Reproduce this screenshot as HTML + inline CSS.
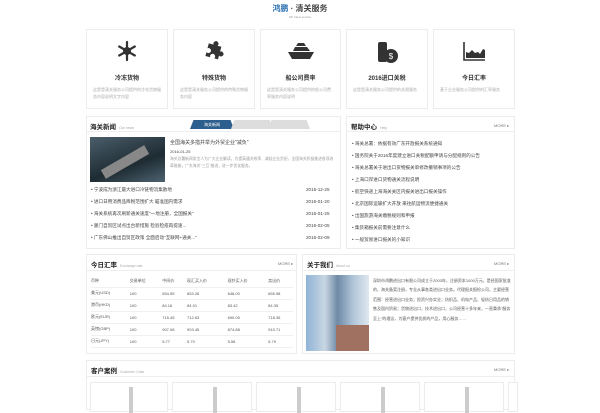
<!DOCTYPE html>
<html><head><meta charset="utf-8"><style>
*{margin:0;padding:0;box-sizing:border-box}
body{width:600px;height:400px;overflow:hidden;background:#fff;font-family:"Liberation Sans","Noto Sans CJK SC",sans-serif;color:#333;position:relative}
.a{position:absolute}
.box{position:absolute;border:1px solid #ececec;background:#fff}
.t{font-size:5px;white-space:nowrap}
.g{color:#999}
.card .i{position:absolute;left:0;right:0;top:10px;text-align:center}
.card .n{position:absolute;left:0;right:0;top:43px;text-align:center;font-size:6px;font-weight:bold;color:#333}
.card .d{position:absolute;left:6px;right:6px;top:56px;font-size:4px;line-height:7px;color:#aaa}
.hd{font-size:6.5px;font-weight:bold;color:#222}
.hd span{font-weight:normal;font-size:3.5px;color:#aaa;margin-left:3px}
.more{font-size:4px;color:#777}
.li{position:absolute;font-size:4.6px;color:#444;white-space:nowrap}
.hr{position:absolute;height:1px;background:#eee}
table{border-collapse:collapse;font-size:4px;color:#555}
td{height:12px;border-bottom:1px solid #f0f0f0;white-space:nowrap}
</style></head><body>
<div class="a" style="left:0;right:0;top:3px;text-align:center;font-size:8px;font-weight:bold;color:#444"><span style="color:#2a6fb0">鸿鹏</span> · 清关服务</div>
<div class="a t g" style="left:0;right:0;top:15px;text-align:center;font-size:3px">HP Clear service</div>

<div class="box card" style="left:86px;top:29px;width:82px;height:80px"><div class="i"><svg width="22" height="22" viewBox="0 0 22 22"><g stroke="#333" stroke-width="2.2" stroke-linecap="round"><line x1="11" y1="2" x2="11" y2="20"/><line x1="3.2" y1="6.5" x2="18.8" y2="15.5"/><line x1="3.2" y1="15.5" x2="18.8" y2="6.5"/></g><circle cx="11" cy="11" r="4" fill="#333"/></svg></div><div class="n">冷冻货物</div><div class="d">这是是清关服务公司提供的冷冻货物服务内容说明文字内容</div></div>
<div class="box card" style="left:173px;top:29px;width:82px;height:80px"><div class="i"><svg width="22" height="22" viewBox="0 0 22 22"><path d="M4 5h5a2.5 2.5 0 1 1 4 0h4v5a2.5 2.5 0 1 1 0 4v4h-4a2.5 2.5 0 1 0-4 0H4v-4a2.5 2.5 0 1 0 0-4z" fill="#333" transform="rotate(15 11 11)"/></svg></div><div class="n">特殊货物</div><div class="d">这是是清关服务公司提供的特殊货物服务内容</div></div>
<div class="box card" style="left:260px;top:29px;width:81px;height:80px"><div class="i"><svg width="28" height="22" viewBox="0 0 28 22"><path d="M1 12h26l-4 7H5z" fill="#333"/><path d="M6 11l2-4h12l3 4z" fill="#333"/><path d="M9 6l2-3h6l2 3z" fill="#333"/></svg></div><div class="n">船公司费率</div><div class="d">这是是清关服务公司提供的船公司费率服务内容说明</div></div>
<div class="box card" style="left:346px;top:29px;width:82px;height:80px"><div class="i"><svg width="24" height="24" viewBox="0 0 24 24"><rect x="3" y="2" width="9" height="20" rx="2" fill="#333"/><circle cx="16" cy="16" r="7" fill="#333"/><text x="16" y="19" font-size="8" fill="#fff" text-anchor="middle" font-family="Liberation Sans">$</text></svg></div><div class="n">2016进口关税</div><div class="d">这是是清关服务公司提供的关税服务</div></div>
<div class="box card" style="left:433px;top:29px;width:82px;height:80px"><div class="i"><svg width="24" height="22" viewBox="0 0 24 22"><path d="M2 2v18h21" stroke="#333" stroke-width="1.6" fill="none"/><path d="M4 18V12l3 1 3-3 3 3 3-1 2 2 3-5 2 1v8z" fill="#333"/></svg></div><div class="n">今日汇率</div><div class="d">基于企业服务公司提供的汇率服务</div></div>

<div class="box" style="left:86px;top:116px;width:255px;height:133px"></div>
<div class="a hd" style="left:90px;top:121px">海关新闻<span>Our news</span></div>
<div class="a" style="left:190px;top:120px;width:44px;height:9px;background:#2d5f8e;clip-path:polygon(8% 0,92% 0,100% 100%,0 100%);font-size:4px;color:#fff;text-align:center;line-height:9px">海关新闻</div>
<div class="a" style="left:231px;top:120px;width:42px;height:9px;background:#ddd;clip-path:polygon(8% 0,92% 0,100% 100%,0 100%)"></div>
<div class="a" style="left:268px;top:120px;width:42px;height:9px;background:#ddd;clip-path:polygon(8% 0,92% 0,100% 100%,0 100%)"></div>
<div class="hr" style="left:86px;top:131px;width:255px"></div>
<div class="a" style="left:90px;top:137px;width:75px;height:45px;background:linear-gradient(160deg,#4a5e6a,#1e2b33 60%,#4d6370)"><div class="a" style="left:10px;top:20px;width:50px;height:10px;background:#888;transform:rotate(-30deg)"></div></div>
<div class="li" style="left:170px;top:139px;font-size:5px">全国海关多措并举为外贸企业"减负"</div>
<div class="li g" style="left:170px;top:149px;font-size:4px">2016-01-25</div>
<div class="a" style="left:170px;top:156px;width:166px;font-size:3.8px;line-height:7px;color:#999">海关总署新闻发言人为广大企业解读，为提高通关效率、减轻企业负担，全国海关积极推进各项改革措施，广东海关"三互"推进，进一步优化服务。</div>
<div class="li" style="left:91px;top:187px">• 宁波成为浙江最大进口冷链物流集散地</div><div class="li g" style="left:306px;top:187px">2015-12-25</div>
<div class="li" style="left:91px;top:199px">• 进口日用消费品降税范围扩大 瞄准国内需求</div><div class="li g" style="left:306px;top:199px">2016-01-20</div>
<div class="li" style="left:91px;top:211px">• 海关系统再次刷新通关速度"一地注册，全国报关"</div><div class="li g" style="left:306px;top:211px">2016-01-25</div>
<div class="li" style="left:91px;top:223px">• 厦门自贸区试点出台新措施 检验检疫再提速...</div><div class="li g" style="left:306px;top:223px">2016-02-05</div>
<div class="li" style="left:91px;top:235px">• 广东佛山推出自贸区政策 全面启动"互联网+通关..."</div><div class="li g" style="left:306px;top:235px">2016-02-09</div>

<div class="box" style="left:346px;top:116px;width:169px;height:133px"></div>
<div class="a hd" style="left:351px;top:121px">帮助中心<span>Help</span></div>
<div class="a more" style="left:494px;top:123px">MORE ▸</div>
<div class="hr" style="left:346px;top:131px;width:169px"></div>
<div class="li" style="left:352px;top:141px">• 海关总署：依据有效广东开放报关系统通知</div>
<div class="li" style="left:352px;top:153px">• 国务院关于2016年度建立进口关税配额申请与分配规则的公告</div>
<div class="li" style="left:352px;top:165px">• 海关总署关于进出口货物报关单修改撤销事项的公告</div>
<div class="li" style="left:352px;top:177px">• 上海口岸进口货物通关流程说明</div>
<div class="li" style="left:352px;top:189px">• 航空快递上海海关关区内报关进出口报关操作</div>
<div class="li" style="left:352px;top:201px">• 北京国际运输扩大开放 来往航运物流便捷通关</div>
<div class="li" style="left:352px;top:213px">• 出国旅游海关缴税规则和申报</div>
<div class="li" style="left:352px;top:225px">• 集装箱报关前需要注意什么</div>
<div class="li" style="left:352px;top:237px">• 一般贸易进口报关的小知识</div>

<div class="box" style="left:86px;top:254px;width:211px;height:100px"></div>
<div class="a hd" style="left:91px;top:259px">今日汇率<span>Exchange rate</span></div>
<div class="a more" style="left:278px;top:261px">MORE ▸</div>
<div class="hr" style="left:86px;top:270px;width:211px"></div>
<table class="a" style="left:91px;top:275px;width:202px">
<tr><td>币种</td><td>交易单位</td><td>中间价</td><td>现汇买入价</td><td>现钞买入价</td><td>卖出价</td></tr>
<tr><td>美元(USD)</td><td>100</td><td>654.55</td><td>653.26</td><td>648.00</td><td>655.98</td></tr>
<tr><td>港币(HKD)</td><td>100</td><td>84.16</td><td>84.01</td><td>83.42</td><td>84.35</td></tr>
<tr><td>欧元(EUR)</td><td>100</td><td>715.45</td><td>712.63</td><td>690.05</td><td>718.35</td></tr>
<tr><td>英镑(GBP)</td><td>100</td><td>907.08</td><td>903.45</td><td>874.88</td><td>910.71</td></tr>
<tr><td>日元(JPY)</td><td>100</td><td>5.77</td><td>5.70</td><td>5.58</td><td>5.79</td></tr>
</table>

<div class="box" style="left:302px;top:254px;width:213px;height:100px"></div>
<div class="a hd" style="left:307px;top:259px">关于我们<span>About us</span></div>
<div class="a more" style="left:494px;top:261px">MORE ▸</div>
<div class="hr" style="left:302px;top:270px;width:213px"></div>
<div class="a" style="left:306px;top:275px;width:63px;height:76px;background:linear-gradient(90deg,#8fb3d6 0,#c8d6e2 30%,#6f8aa6 50%,#b0c5d8 75%,#dfe8f0)"><div class="a" style="left:30px;top:50px;width:33px;height:26px;background:#a07060"></div></div>
<div class="a" style="left:373px;top:276px;width:138px;font-size:4px;line-height:9.4px;color:#555">深圳市鸿鹏进出口有限公司成立于2003年，注册资本1000万元，是经国家批准的、海关备案注册，专业从事各类进出口业务。代理报关报检公司，主要经营范围：经营进出口业务；投资兴办实业；纺织品、机电产品、轻纺日用品的销售及国内贸易；货物进出口，技术进出口，公司经营十多年来，一直秉承"服务至上"的理念，为客户提供优质的产品，用心服务……</div>

<div class="box" style="left:86px;top:360px;width:429px;height:50px"></div>
<div class="a hd" style="left:91px;top:365px">客户案例<span>Customer Case</span></div>
<div class="a more" style="left:494px;top:367px">MORE ▸</div>
<div class="hr" style="left:86px;top:376px;width:429px"></div>
<div class="box" style="left:90px;top:382px;width:78px;height:30px"><div class="a" style="left:38px;top:4px;width:4px;height:26px;background:#ccc"></div></div>
<div class="box" style="left:172px;top:382px;width:80px;height:30px"><div class="a" style="left:40px;top:4px;width:4px;height:26px;background:#ccc"></div></div>
<div class="box" style="left:256px;top:382px;width:80px;height:30px"><div class="a" style="left:40px;top:4px;width:4px;height:26px;background:#ccc"></div></div>
<div class="box" style="left:340px;top:382px;width:80px;height:30px"><div class="a" style="left:40px;top:4px;width:4px;height:26px;background:#ccc"></div></div>
<div class="box" style="left:424px;top:382px;width:80px;height:30px"><div class="a" style="left:40px;top:4px;width:4px;height:26px;background:#ccc"></div></div>
<div class="box" style="left:508px;top:382px;width:10px;height:30px"></div>
</body></html>
